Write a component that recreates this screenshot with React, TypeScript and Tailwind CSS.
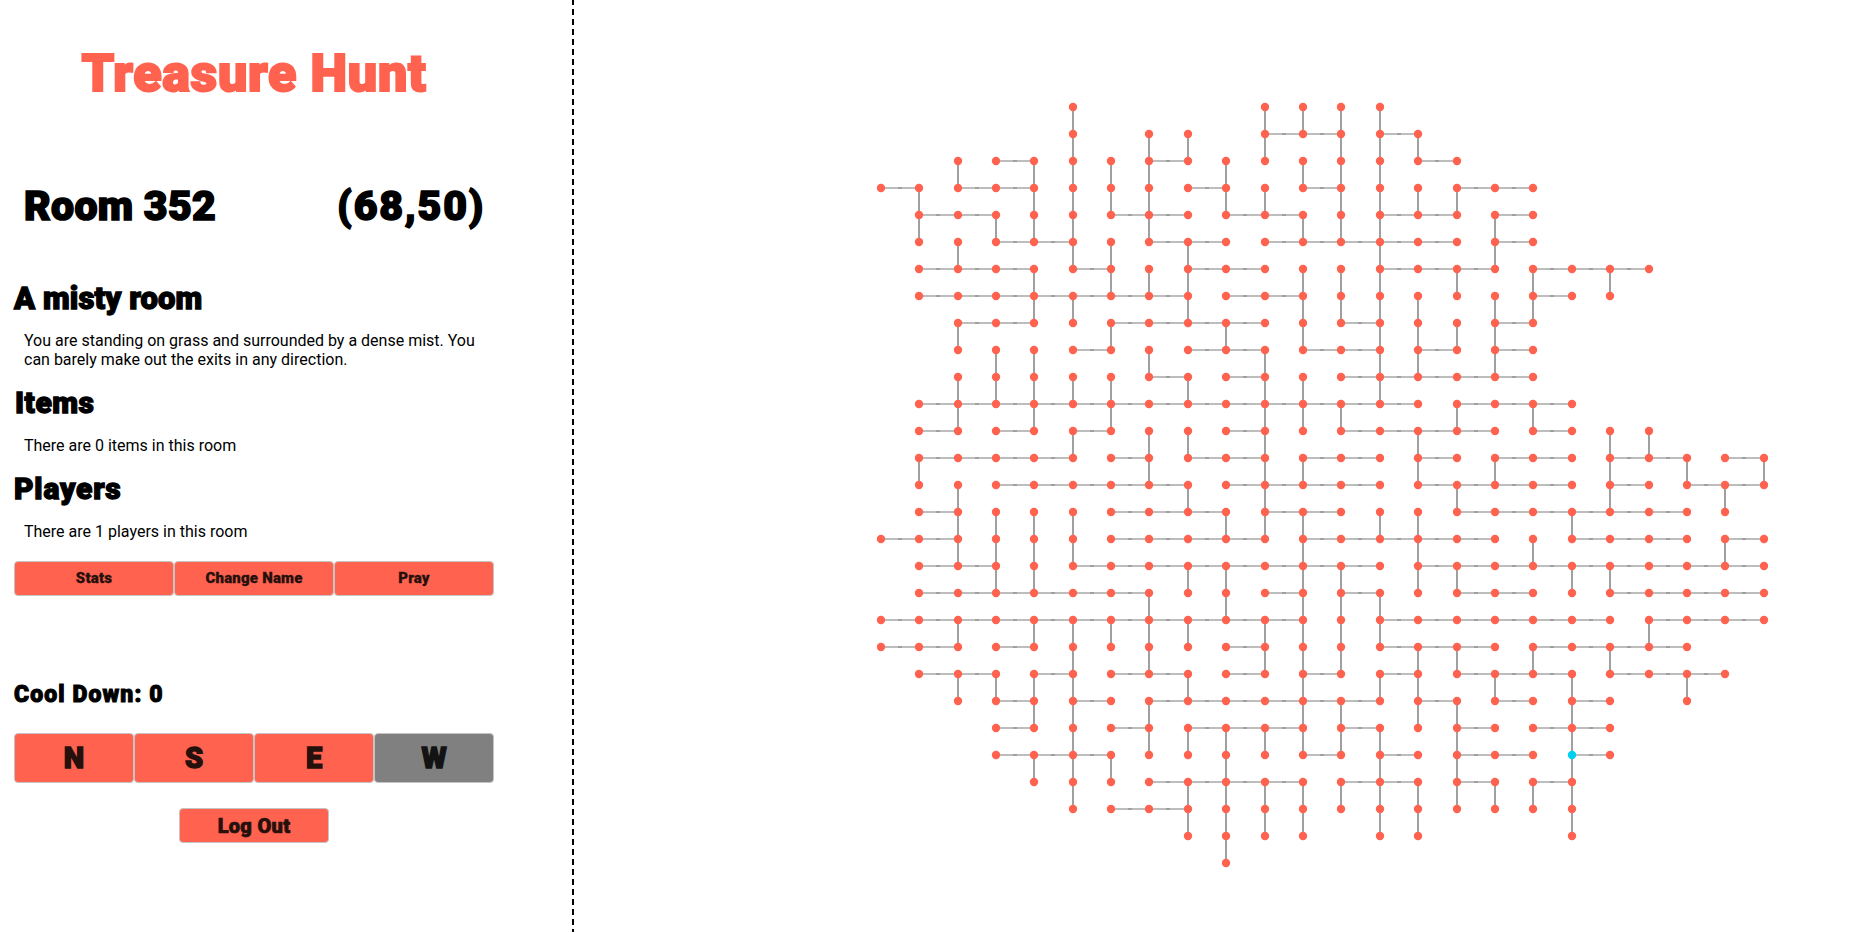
import type { ReactNode } from "react";

type Run = [number, number];

const COLUMNS = [
  881, 919, 958, 996, 1034, 1073, 1111, 1149, 1188, 1226, 1265, 1303, 1341, 1380, 1418, 1457, 1495, 1533, 1572,
  1610, 1649, 1687, 1725, 1764,
];
const TOP = 107;
const PITCH = 27;
const CURRENT = "18,24";

// West-east corridors, listed per row as [first column, last column].
const CORRIDORS: Run[][] = [
  [],
  [[10, 12], [13, 14]],
  [[3, 4], [7, 8], [14, 15]],
  [[0, 1], [2, 4], [8, 9], [11, 12], [15, 17]],
  [[1, 3], [6, 8], [9, 11], [13, 15], [16, 17]],
  [[3, 5], [7, 9], [10, 15], [16, 17]],
  [[1, 4], [5, 6], [8, 10], [13, 16], [17, 20]],
  [[1, 8], [9, 11], [17, 18]],
  [[2, 4], [6, 10], [12, 13], [16, 17]],
  [[5, 6], [8, 10], [11, 13], [14, 15], [16, 17]],
  [[7, 8], [9, 10], [12, 17]],
  [[1, 14], [15, 18]],
  [[1, 2], [3, 4], [5, 6], [9, 10], [12, 16], [17, 18]],
  [[1, 5], [6, 7], [8, 10], [11, 13], [14, 15], [16, 18], [19, 21], [22, 23]],
  [[3, 8], [9, 13], [14, 18], [19, 20], [21, 23]],
  [[1, 2], [6, 9], [10, 12], [15, 21]],
  [[0, 2], [6, 10], [11, 16], [18, 21], [22, 23]],
  [[1, 3], [5, 13], [14, 23]],
  [[1, 7], [10, 11], [12, 13], [15, 17], [19, 23]],
  [[0, 11], [13, 19], [20, 23]],
  [[0, 2], [3, 4], [9, 10], [13, 16], [17, 21]],
  [[1, 3], [4, 5], [6, 8], [9, 10], [11, 12], [13, 14], [15, 18], [19, 22]],
  [[3, 4], [5, 6], [7, 13], [14, 15], [16, 17], [18, 19]],
  [[3, 4], [6, 7], [8, 11], [12, 13], [15, 16], [17, 19]],
  [[3, 6], [11, 12], [13, 14], [15, 17], [18, 19]],
  [[7, 11], [12, 14], [15, 16], [17, 18]],
  [[6, 8]],
];

// North-south corridors, listed per column as [first row, last row].
const SHAFTS: Run[][] = [
  [],
  [[3, 5], [13, 14]],
  [[2, 3], [5, 6], [8, 9], [10, 12], [14, 17], [19, 20], [21, 22]],
  [[4, 5], [9, 11], [15, 18], [21, 22]],
  [[2, 5], [6, 8], [9, 12], [15, 18], [19, 20], [21, 23], [24, 25]],
  [[0, 6], [7, 8], [10, 11], [12, 13], [15, 17], [19, 26]],
  [[2, 4], [5, 7], [8, 9], [10, 12], [19, 20], [24, 25]],
  [[1, 5], [6, 7], [9, 10], [12, 14], [18, 21], [22, 24]],
  [[1, 2], [5, 8], [10, 11], [12, 13], [14, 15], [17, 18], [19, 20], [21, 22], [23, 24], [25, 27]],
  [[2, 4], [8, 9], [15, 16], [17, 19], [23, 28]],
  [[0, 2], [3, 4], [9, 16], [19, 21], [23, 24], [25, 27]],
  [[0, 1], [2, 3], [4, 5], [6, 9], [10, 12], [13, 14], [15, 24], [25, 27]],
  [[0, 5], [6, 8], [11, 12], [17, 21], [22, 24], [25, 26]],
  [[0, 11], [15, 16], [18, 20], [21, 22], [23, 27]],
  [[1, 2], [3, 4], [7, 10], [12, 14], [15, 18], [20, 23], [25, 27]],
  [[3, 4], [6, 7], [8, 9], [11, 12], [14, 15], [17, 18], [20, 21], [22, 26]],
  [[4, 6], [7, 10], [13, 14], [21, 22], [25, 26]],
  [[6, 8], [11, 12], [16, 17], [20, 21], [25, 26]],
  [[15, 16], [17, 18], [21, 27]],
  [[6, 7], [12, 15], [17, 18], [20, 21]],
  [[12, 13], [19, 20]],
  [[13, 14], [21, 22]],
  [[14, 15], [16, 17]],
  [[13, 14]],
];

const y = (row: number) => TOP + row * PITCH;
const span = ([a, b]: Run) => Array.from({ length: b - a + 1 }, (_, i) => a + i);

const rooms = Array.from(
  new Set([
    ...CORRIDORS.flatMap((runs, row) => runs.flatMap(span).map((col) => `${col},${row}`)),
    ...SHAFTS.flatMap((runs, col) => runs.flatMap(span).map((row) => `${col},${row}`)),
  ]),
);

function RoomMap() {
  return (
    <svg className="block h-full w-full" viewBox="574 0 1287 932">
      {CORRIDORS.flatMap((runs, row) =>
        runs.flatMap(([a, b]) =>
          span([a, b - 1]).map((col) => {
            const mid = Math.floor((COLUMNS[col] + COLUMNS[col + 1]) / 2);
            return (
              <g key={`h${row}-${col}`}>
                <rect x={COLUMNS[col]} y={y(row) - 1} width={COLUMNS[col + 1] - COLUMNS[col]} height="2" fill="#bdbdbd" />
                <rect x={mid - 2} y={y(row) - 1} width="4" height="2" fill="#a0a0a0" />
              </g>
            );
          }),
        ),
      )}
      {SHAFTS.flatMap((runs, col) =>
        runs.map(([a, b]) => (
          <rect key={`v${col}-${a}`} x={COLUMNS[col] - 1} y={y(a)} width="2" height={y(b) - y(a)} fill="#a0a0a0" />
        )),
      )}
      {rooms.map((id) => {
        const [col, row] = id.split(",").map(Number);
        return <circle key={id} cx={COLUMNS[col]} cy={y(row)} r="4.2" fill={id === CURRENT ? "#00cfef" : "#ff624f"} />;
      })}
    </svg>
  );
}

function Heading({ children, className }: { children: ReactNode; className: string }) {
  return <h2 className={`font-black whitespace-nowrap text-black ${className}`}>{children}</h2>;
}

function Button({ children, className }: { children: ReactNode; className: string }) {
  return (
    <button
      className={`flex items-center justify-center rounded border border-[#c4c4c4] font-black whitespace-nowrap ${className}`}
    >
      {children}
    </button>
  );
}

export default function App() {
  return (
    <div className="flex h-[932px] w-[1861px] overflow-hidden bg-white font-['Roboto',sans-serif] text-black">
      <aside className="flex w-[572px] shrink-0 flex-col pl-3.5">
        <div className="flex w-[480px] flex-col">
          <h1 className="mt-11 text-center text-[52px] leading-[60px] font-black tracking-[0.7px] whitespace-nowrap text-[#ff624f] [-webkit-text-stroke:2px_#ff624f]">
            Treasure Hunt
          </h1>
          <div className="mt-[78px] flex justify-between pr-[9px] pl-2.5">
            <Heading className="text-[41px] leading-[48px] tracking-[0.3px] [-webkit-text-stroke:1.6px_black]">
              Room 352
            </Heading>
            <Heading className="text-[41px] leading-[48px] tracking-[1.8px] [-webkit-text-stroke:1.6px_black]">
              (68,50)
            </Heading>
          </div>
          <Heading className="mt-[51px] text-[31px] leading-9 tracking-[0.1px] [-webkit-text-stroke:1.3px_black]">
            A misty room
          </Heading>
          <p className="mt-3.5 w-[460px] self-center text-base leading-[19px]">
            You are standing on grass and surrounded by a dense mist. You can barely make out the exits in any direction.
          </p>
          <Heading className="mt-4 pl-px text-[30px] leading-9 tracking-[0.5px] [-webkit-text-stroke:1.3px_black]">
            Items
          </Heading>
          <p className="mt-[15px] w-[460px] self-center text-base leading-[19px]">There are 0 items in this room</p>
          <Heading className="mt-4 text-[30px] leading-9 tracking-[0.8px] [-webkit-text-stroke:1.3px_black]">
            Players
          </Heading>
          <p className="mt-[15px] w-[460px] self-center text-base leading-[19px]">There are 1 players in this room</p>
          <div className="mt-5 grid h-[35px] grid-cols-3 text-[15px] tracking-[0.2px] text-[#26100c] [-webkit-text-stroke:0.3px_#26100c]">
            <Button className="bg-[#ff624f]">Stats</Button>
            <Button className="bg-[#ff624f]">Change Name</Button>
            <Button className="bg-[#ff624f]">Pray</Button>
          </div>
          <Heading className="mt-[85px] text-[23px] leading-7 tracking-[1.1px] [-webkit-text-stroke:1px_black]">
            Cool Down: 0
          </Heading>
          <div className="mt-6 grid h-[50px] grid-cols-4 text-[29px] text-[#26100c]">
            <Button className="bg-[#ff624f] pt-0.5 [-webkit-text-stroke:1.4px_#26100c]">N</Button>
            <Button className="bg-[#ff624f] pt-0.5 [-webkit-text-stroke:1.4px_#26100c]">S</Button>
            <Button className="bg-[#ff624f] pt-0.5 [-webkit-text-stroke:1.4px_#26100c]">E</Button>
            <Button className="bg-[#808080] pt-0.5 text-[#131313] [-webkit-text-stroke:1.4px_#131313]">W</Button>
          </div>
          <Button className="mt-[25px] h-[35px] w-[150px] self-center bg-[#ff624f] text-xl tracking-[0.3px] text-[#26100c] [-webkit-text-stroke:0.7px_#26100c]">
            Log Out
          </Button>
        </div>
      </aside>
      <div className="w-0.5 shrink-0 bg-[repeating-linear-gradient(to_bottom,#000_0,#000_5px,#fff_5px,#fff_9px,#000_9px,#000_10px)]" />
      <main className="min-w-0 flex-1">
        <RoomMap />
      </main>
    </div>
  );
}
